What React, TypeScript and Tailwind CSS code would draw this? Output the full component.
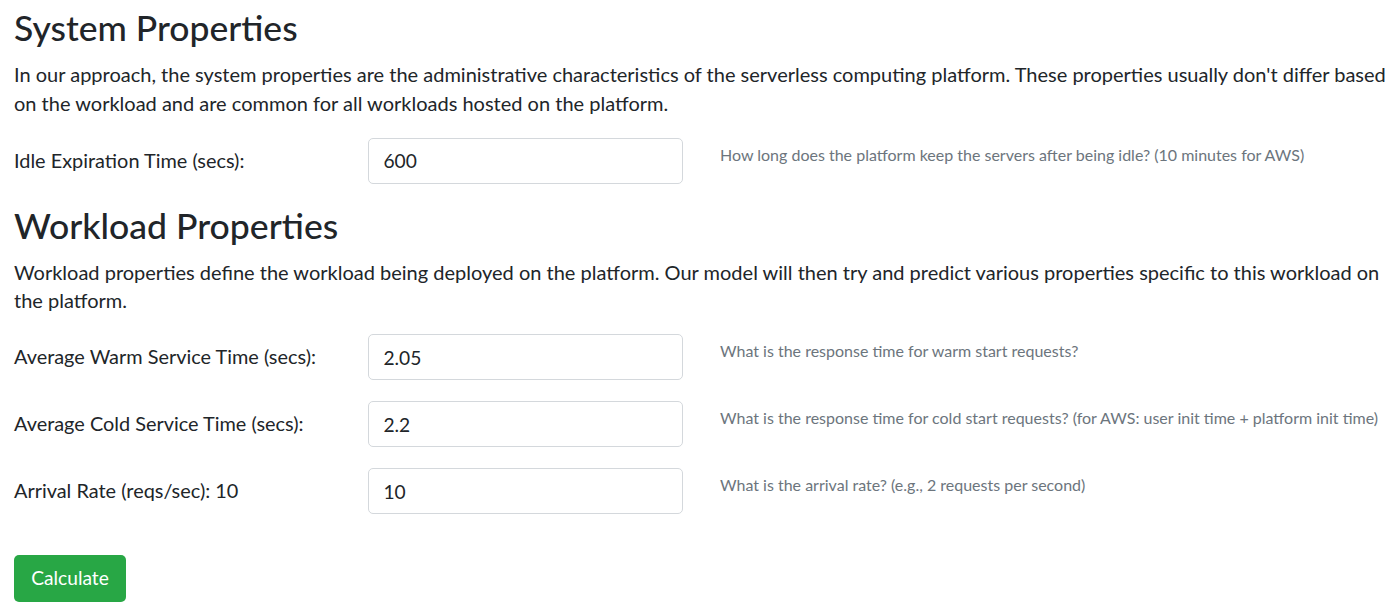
import React from "react";

function Row({ label, value, help }: { label: string; value: string; help: string }) {
  return (
    <div className="flex items-start">
      <div className="w-[354px] h-[46px] flex items-center text-[19.9px] whitespace-nowrap">{label}</div>
      <input
        readOnly
        value={value}
        className="w-[315px] h-[46px] border border-[#d4d8dc] rounded-[5px] px-[14.4px] text-[19.2px] text-[#212529] bg-white outline-none"
      />
      <div className="ml-[37px] mt-[5px] whitespace-nowrap text-[16px] leading-[23px] text-[#6c757d]">{help}</div>
    </div>
  );
}

export default function App() {
  return (
    <div className="min-h-[616px] bg-white px-[14px] text-[#212529] font-['Lato',sans-serif]">
      <h2 className="pt-[5px] text-[35.5px] leading-[46px] font-medium">System Properties</h2>
      <p className="mt-[9px] text-[20px] leading-[28.8px] whitespace-nowrap">
        In our approach, the system properties are the administrative characteristics of the serverless computing
        platform. These properties usually don't differ based
        <br />
        on the workload and are common for all workloads hosted on the platform.
      </p>
      <div className="mt-[20px]">
        <Row
          label="Idle Expiration Time (secs):"
          value="600"
          help="How long does the platform keep the servers after being idle? (10 minutes for AWS)"
        />
      </div>
      <h2 className="mt-[19px] text-[35.6px] leading-[46px] font-medium">Workload Properties</h2>
      <p className="mt-[9px] text-[20px] leading-[28.8px] whitespace-nowrap">
        Workload properties define the workload being deployed on the platform. Our model will then try and predict
        various properties specific to this workload on
        <br />
        the platform.
      </p>
      <div className="mt-[19px] flex flex-col gap-[21px]">
        <Row
          label="Average Warm Service Time (secs):"
          value="2.05"
          help="What is the response time for warm start requests?"
        />
        <Row
          label="Average Cold Service Time (secs):"
          value="2.2"
          help="What is the response time for cold start requests? (for AWS: user init time + platform init time)"
        />
        <Row
          label="Arrival Rate (reqs/sec): 10"
          value="10"
          help="What is the arrival rate? (e.g., 2 requests per second)"
        />
      </div>
      <button className="mt-[41px] w-[112px] h-[47px] bg-[#28a745] rounded-[5px] text-white text-[19.2px]">
        Calculate
      </button>
    </div>
  );
}
